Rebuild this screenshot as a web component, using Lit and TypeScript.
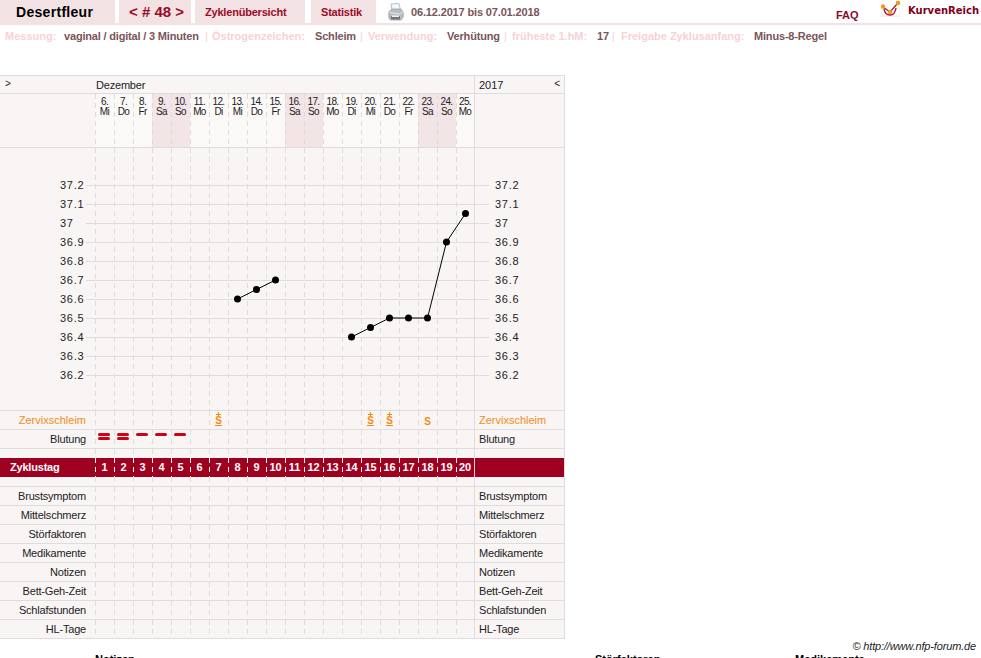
import { LitElement, html, css, svg } from "lit";
import { customElement } from "lit/decorators.js";

const days = [
  ["6.", "Mi"], ["7.", "Do"], ["8.", "Fr"], ["9.", "Sa"], ["10.", "So"],
  ["11.", "Mo"], ["12.", "Di"], ["13.", "Mi"], ["14.", "Do"], ["15.", "Fr"],
  ["16.", "Sa"], ["17.", "So"], ["18.", "Mo"], ["19.", "Di"], ["20.", "Mi"],
  ["21.", "Do"], ["22.", "Fr"], ["23.", "Sa"], ["24.", "So"], ["25.", "Mo"],
];
const temps = ["37.2", "37.1", "37", "36.9", "36.8", "36.7", "36.6", "36.5", "36.4", "36.3", "36.2"];
const lines = [
  [[7, 36.6], [8, 36.65], [9, 36.7]],
  [[13, 36.4], [14, 36.45], [15, 36.5], [16, 36.5], [17, 36.5], [18, 36.9], [19, 37.05]],
];
const slime: Record<number, boolean> = { 6: true, 14: true, 15: true, 17: false };
const blood: Record<number, number> = { 0: 2, 1: 2, 2: 1, 3: 1, 4: 1 };
const extraRows = ["Brustsymptom", "Mittelschmerz", "Störfaktoren", "Medikamente", "Notizen", "Bett-Geh-Zeit", "Schlafstunden", "HL-Tage"];

const px = (i: number) => 95 + i * 19 + 9.5;
// chart svg starts at y=148 on the page
const py = (t: number) => 37 + (37.2 - t) * 190;

@customElement("app-root")
export class AppRoot extends LitElement {
  static styles = css`
    :host {
      display: block;
      width: 981px;
      height: 658px;
      overflow: hidden;
      position: relative;
      background: #fff;
      font-family: "Liberation Sans", Arial, sans-serif;
      font-size: 11px;
      color: #222;
    }
    .top {
      display: flex;
      height: 23px;
      border-bottom: 2px solid #f3e2e4;
      align-items: stretch;
    }
    .tab {
      background: #f3e2e4;
      color: #9c0a26;
      font-weight: bold;
      display: flex;
      align-items: center;
      box-sizing: border-box;
      margin-right: 4px;
      white-space: pre;
    }
    .name { width: 115px; padding-left: 16px; color: #000; font-size: 14px; letter-spacing: 0.3px; }
    .num { width: 72px; padding-left: 10px; font-size: 15px; }
    .over { width: 110px; padding-left: 10px; margin-right: 6px; letter-spacing: -0.2px; }
    .stat { width: 65px; padding-left: 10px; margin-right: 12px; letter-spacing: -0.2px; }
    .printer { width: 16px; height: 18px; align-self: center; margin-right: 7px; }
    .range { align-self: center; font-weight: bold; color: #7a5559; width: 425px; letter-spacing: -0.15px; }
    .faq { color: #8a0a24; font-weight: bold; width: 43px; padding-top: 9px; }
    .logo { display: flex; align-items: flex-start; }
    .logo svg { width: 22px; height: 19px; margin-right: 7px; }
    .logo span {
      color: #800020;
      font-family: "DejaVu Sans", sans-serif;
      font-weight: bold;
      font-size: 10px;
      padding-top: 5px;
    }
    .meta {
      display: flex;
      height: 50px;
      padding: 5px 0 0 5px;
      box-sizing: border-box;
      font-weight: bold;
      color: #f8d2d5;
      white-space: pre;
    }
    .meta b { color: #7a5559; letter-spacing: -0.18px; }
    .meta i { font-style: normal; font-weight: normal; }
    .table {
      width: 565px;
      background: #f9f5f5;
      border-top: 1px solid #dedcdc;
      border-right: 1px solid #dedcdc;
      box-sizing: border-box;
      position: relative;
    }
    .row {
      display: grid;
      grid-template-columns: 95px repeat(19, 19px) 18px 1fr;
      height: 19px;
      box-sizing: border-box;
      border-bottom: 1px solid #dedcdc;
    }
    .label {
      text-align: right;
      padding-right: 9px;
      line-height: 18px;
      white-space: nowrap;
      letter-spacing: -0.2px;
    }
    .right {
      border-left: 1px solid #dedcdc;
      padding-left: 4px;
      line-height: 18px;
      white-space: nowrap;
      letter-spacing: -0.2px;
    }
    .cell {
      background-image: linear-gradient(#dedcdc 5px, transparent 5px);
      background-size: 1px 9px;
      background-repeat: repeat-y;
      position: relative;
    }
    .head { height: 18px; grid-template-columns: 95px 379px 1fr; line-height: 18px; }
    .head .hl { padding-left: 5px; font-size: 10px; line-height: 15px; }
    .head .right { display: flex; justify-content: space-between; padding-right: 4px; letter-spacing: 0; }
    .head .right em { font-style: normal; font-size: 10px; line-height: 15px; }
    .head .m { padding-left: 1px; letter-spacing: -0.2px; }
    .daysrow { height: 54px; }
    .day {
      background-color: #fbf8f8;
      text-align: center;
      font-size: 10px;
      line-height: 9.5px;
      padding-top: 3px;
      letter-spacing: -0.6px;
    }
    .day.we { background-color: #f3e4e6; }
    .chart { display: block; border-bottom: 1px solid #dedcdc; width: 564px; height: 262px; }
    .chart text { font-size: 11px; letter-spacing: 0.7px; fill: #222; font-family: "Liberation Sans", Arial, sans-serif; }
    .orange { color: #f78a12; letter-spacing: 0; }
    .mark {
      display: flex;
      flex-direction: column;
      align-items: center;
      color: #f78a12;
      font-weight: bold;
      padding-top: 1px;
    }
    .plus {
      width: 5px;
      height: 5px;
      margin-bottom: 1px;
      background:
        linear-gradient(#f78a12, #f78a12) center / 5px 1px no-repeat,
        linear-gradient(#f78a12, #f78a12) center / 1px 5px no-repeat;
    }
    .plus.none { background: none; }
    .mark span { font-size: 10px; height: 6.5px; line-height: 6.5px; }
    .mark span.big { height: 8px; line-height: 8px; }
    .mark u { display: block; width: 7px; height: 1.5px; background: #f78a12; }
    .dash { display: block; width: 12px; height: 3px; border-radius: 2px; background: #d00015; margin: 0 0 1px 3px; }
    .dashes { padding-top: 3px; }
    .band {
      background: #9e0020;
      color: #fff;
      font-weight: bold;
      border-bottom: none;
      height: 19px;
    }
    .band .label { text-align: left; padding-left: 10px; }
    .band .cell {
      background-image: linear-gradient(#fff 5px, transparent 5px);
      text-align: center;
      line-height: 18px;
    }
    .bandgap { height: 9px; border-bottom: none; }
    .gap { height: 10px; }
    .foot {
      position: absolute;
      right: 5px;
      top: 640px;
      font-style: italic;
      line-height: 13px;
      letter-spacing: -0.15px;
    }
    .notes {
      position: absolute;
      top: 653px;
      left: 0;
      width: 100%;
      font-weight: bold;
      color: #000;
      display: grid;
      grid-template-columns: 95px 500px 200px 1fr;
    }
  `;

  private chart() {
    return html`<svg class="chart" viewBox="0 0 564 262">
      ${days.map((_, i) => svg`<line x1=${95.5 + i * 19} x2=${95.5 + i * 19} y1="0" y2="262" stroke="#dedcdc" stroke-dasharray="5 4" />`)}
      <line x1="474.5" x2="474.5" y1="0" y2="262" stroke="#dedcdc" />
      ${temps.map((t, i) => {
        const y = 37.5 + i * 19;
        return svg`
          <line x1="86" x2="489" y1=${y} y2=${y} stroke="#dedcdc" />
          <text x="60" y=${y + 3.5}>${t}</text>
          <text x="495" y=${y + 3.5}>${t}</text>`;
      })}
      ${lines.map((l) => svg`
        <polyline fill="none" stroke="#000" points=${l.map(([i, t]) => `${px(i)},${py(t)}`).join(" ")} />
        ${l.map(([i, t]) => svg`<circle cx=${px(i)} cy=${py(t)} r="3.5" fill="#000" />`)}`)}
    </svg>`;
  }

  private cells(fn: (i: number) => unknown = () => "") {
    return days.map((_, i) => html`<div class="cell">${fn(i)}</div>`);
  }

  render() {
    return html`
      <div class="top">
        <div class="tab name">Desertfleur</div>
        <div class="tab num">&lt; # 48 &gt;</div>
        <div class="tab over">Zyklenübersicht</div>
        <div class="tab stat">Statistik</div>
        <svg class="printer" viewBox="0 0 16 18">
          <path d="M3 1l8-.5 1.5 6.5H4z" fill="#f6f7f8" stroke="#a4b0b8" stroke-width=".8" />
          <path d="M.8 9l3-3h9l2.4 3v5l-2.2 3H2.5L.8 15z" fill="#b9bec2" stroke="#868c90" stroke-width=".6" />
          <path d="M1.5 9.5l10 1.5 3.5-2.2" fill="none" stroke="#e8eaec" stroke-width=".9" />
          <path d="M3 13h9v3.5H3z" fill="#70767a" />
          <path d="M4 12.5h7v1.5H4z" fill="#f0f1f2" />
        </svg>
        <div class="range">06.12.2017 bis 07.01.2018</div>
        <div class="faq">FAQ</div>
        <div class="logo">
          <svg viewBox="0 0 22 19">
            <path d="M3 8v9M2 16h19" fill="none" stroke="#f2dfe1" stroke-width="1" />
            <path d="M4 7l7 5 8-9" fill="none" stroke="#b0102e" stroke-width="1.3" />
            <path d="M5 9q1 6 6 6t6-7" fill="none" stroke="#b0102e" stroke-width="1.4" />
            <circle cx="4" cy="6.5" r="2.2" fill="#f39a1e" />
            <circle cx="11" cy="12" r="2.2" fill="#f39a1e" />
            <circle cx="19" cy="3" r="2.3" fill="#f39a1e" />
          </svg>
          <span>KurvenReich</span>
        </div>
      </div>
      <div class="meta">
        <span style="width:59px">Messung:</span><b style="width:141px">vaginal / digital / 3 Minuten</b><i style="width:7px">|</i>
        <span style="width:103px">Östrogenzeichen:</span><b style="width:45px">Schleim</b><i style="width:8px">|</i>
        <span style="width:79px">Verwendung:</span><b style="width:57px">Verhütung</b><i style="width:8px">|</i>
        <span style="width:85px">früheste 1.hM:</span><b style="width:15px">17</b><i style="width:9px">|</i>
        <span style="width:133px">Freigabe Zyklusanfang:</span><b>Minus-8-Regel</b>
      </div>
      <div class="table">
        <div class="row head">
          <div class="hl">&gt;</div>
          <div class="m">Dezember</div>
          <div class="right">2017<em>&lt;</em></div>
        </div>
        <div class="row daysrow">
          <div></div>
          ${days.map(
            ([d, w]) => html`<div class="cell day ${w === "Sa" || w === "So" ? "we" : ""}">${d}<br />${w}</div>`
          )}
          <div class="right"></div>
        </div>
        ${this.chart()}
        <div class="row">
          <div class="label orange">Zervixschleim</div>
          ${this.cells((i) =>
            i in slime
              ? html`<div class="mark">
                  <div class="plus ${slime[i] ? "" : "none"}"></div>
                  <span class=${slime[i] ? "" : "big"}>S</span>
                  ${slime[i] ? html`<u></u>` : ""}
                </div>`
              : ""
          )}
          <div class="right orange">Zervixschleim</div>
        </div>
        <div class="row">
          <div class="label">Blutung</div>
          ${this.cells((i) =>
            blood[i]
              ? html`<div class="dashes">${Array.from({ length: blood[i] }, () => html`<span class="dash"></span>`)}</div>`
              : ""
          )}
          <div class="right">Blutung</div>
        </div>
        <div class="row bandgap">
          <div></div>${this.cells()}<div class="right"></div>
        </div>
        <div class="row band">
          <div class="label">Zyklustag</div>
          ${this.cells((i) => i + 1)}
          <div class="right"></div>
        </div>
        <div class="row gap">
          <div></div>${this.cells()}<div class="right"></div>
        </div>
        ${extraRows.map(
          (r) => html`<div class="row">
            <div class="label">${r}</div>
            ${this.cells()}
            <div class="right">${r}</div>
          </div>`
        )}
      </div>
      <div class="foot">© http://www.nfp-forum.de</div>
      <div class="notes"><div></div><div>Notizen</div><div>Störfaktoren</div><div>Medikamente</div></div>
    `;
  }
}
